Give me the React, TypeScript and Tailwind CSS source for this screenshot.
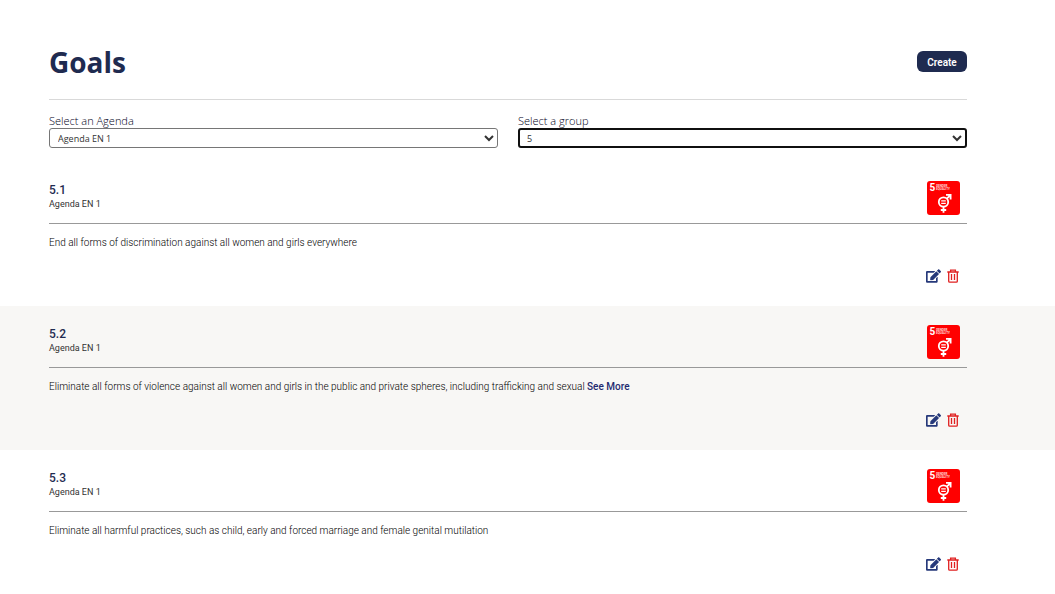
import { FaEdit } from "react-icons/fa"

const goals = [
    { id: "5.1", agenda: "Agenda EN 1", text: "End all forms of discrimination against all women and girls everywhere", more: false },
    { id: "5.2", agenda: "Agenda EN 1", text: "Eliminate all forms of violence against all women and girls in the public and private spheres, including trafficking and sexual", more: true },
    { id: "5.3", agenda: "Agenda EN 1", text: "Eliminate all harmful practices, such as child, early and forced marriage and female genital mutilation", more: false },
]

const GoalBadge = () => {
    return <svg className="h-[34px] w-[33px]" viewBox="0 0 33 34" role="img" aria-label="Gender equality">
        <rect width="33" height="34" rx="3" fill="#ff0000" />
        <text x="2.5" y="10" fill="#fff" fontSize="10" fontWeight="700" fontFamily="Liberation Sans Narrow, Roboto, sans-serif">5</text>
        <g fill="#fff" fillOpacity="0.85" fontSize="3" fontWeight="700" fontFamily="Roboto, sans-serif">
            <text x="9" y="6">GENDER</text>
            <text x="9" y="9">EQUALITY</text>
        </g>
        <g fill="none" stroke="#fff" strokeWidth="1.8">
            <circle cx="16.5" cy="21" r="4.7" />
            <path d="M16.5 25.6v6.2M13.8 29h5.4M19.8 17.7l3.4-3.4M19 13.8h4.6v4.6" />
            <path d="M14.2 19.9h4.6M14.2 22.4h4.6" strokeWidth="1.4" />
        </g>
    </svg>
}

const TrashIcon = () => {
    return <svg className="h-[14px] w-3" viewBox="0 0 12 14" fill="none" stroke="currentColor" strokeWidth="1.3" aria-hidden="true">
        <path d="M0.3 3h11.4M3.6 3V1.2h4.8V3M1.7 3v9.2q0 1 1 1h6.6q1 0 1-1V3M4.5 5v6M7.5 5v6" />
    </svg>
}

export default function App() {
    return <main className="bg-white pt-[43px] font-['Roboto',sans-serif] text-[#333]">
        <div className="pl-[49px] pr-[88px]">
            <div className="flex items-start justify-between border-b border-[#d9d9d9] pb-[18px]">
                <h1 className="font-['Open_Sans',sans-serif] text-[28px] leading-[38px] font-bold text-[#1f2b50]">Goals</h1>
                <button type="button" className="mt-2 h-[21px] w-[50px] rounded-md bg-[#1f2b50] pt-px text-[10px] font-semibold text-white">Create</button>
            </div>
            <div className="grid grid-cols-2 gap-5 pt-3.5 font-['Open_Sans',sans-serif]">
                <div>
                    <label htmlFor="agenda" className="block text-[11px] leading-[14px] font-light text-[#000020]">Select an Agenda</label>
                    <select id="agenda" className="block h-5 w-full rounded-[3px] border border-[#767676] bg-white px-1 text-[9px] text-[#333]">
                        <option>Agenda EN 1</option>
                    </select>
                </div>
                <div>
                    <label htmlFor="group" className="block text-[11px] leading-[14px] font-light text-[#000020]">Select a group</label>
                    <select id="group" className="block h-5 w-full rounded-[3px] border-2 border-[#101010] bg-white px-[3px] text-[9px] text-[#333]">
                        <option>5</option>
                    </select>
                </div>
            </div>
        </div>
        <div className="pt-3.5">
            {goals.map((goal) => (
                <section key={goal.id} className="pt-[19px] pr-[88px] pb-[23px] pl-[49px] even:bg-[#f8f7f5]">
                    <div className="flex items-start justify-between border-b border-[#999] pr-[7px] pb-2">
                        <div className="pt-0.5">
                            <h2 className="text-[12px] leading-[14px] font-medium text-[#1f2b50]">{goal.id}</h2>
                            <p className="text-[9px] leading-[14px]">{goal.agenda}</p>
                        </div>
                        <GoalBadge />
                    </div>
                    <p className="pt-[11px] text-[10px] leading-4 font-light text-black">
                        {goal.text}
                        {goal.more && <> <a href="#" className="font-medium text-[#1f2b70]">See More</a></>}
                    </p>
                    <div className="flex items-center justify-end gap-1.5 pt-[18px] pr-2">
                        <button type="button" aria-label="Edit goal" className="text-[#26397a]"><FaEdit className="h-[14px] w-[15px]" /></button>
                        <button type="button" aria-label="Delete goal" className="text-[#e02020]"><TrashIcon /></button>
                    </div>
                </section>
            ))}
        </div>
    </main>
}
